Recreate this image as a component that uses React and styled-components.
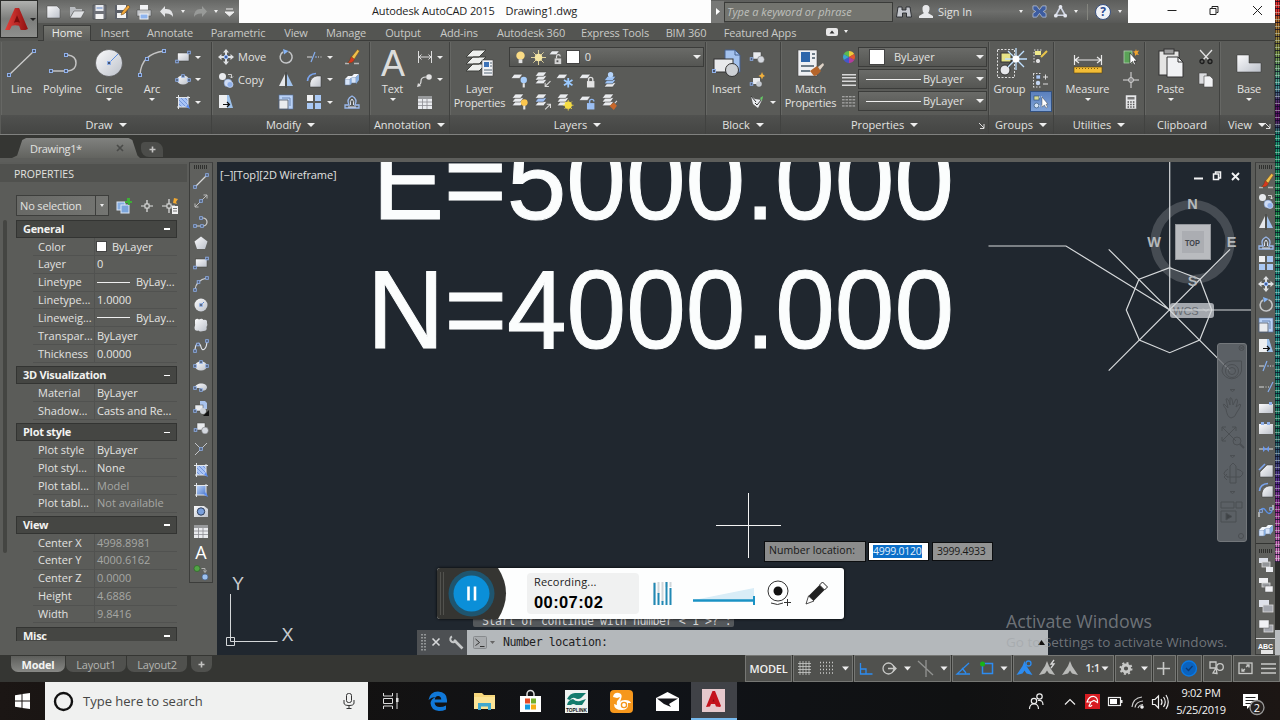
import React from "react";
import styled, { createGlobalStyle, css } from "styled-components";

const GlobalStyle = createGlobalStyle`
  * { box-sizing: border-box; }
  body {
    margin: 0;
    background: #353633;
    overflow: hidden;
    font-family: "Open Sans", "Noto Sans", sans-serif;
    font-size: 11px;
    color: #e2e2e0;
  }
  svg { display: block; flex: none; overflow: visible; }
`;

/* ---------- icons, all on a 16 x 16 grid ---------- */

const W = "#e9ebee";
const B = "#8fb0ea";
const dot = (x, y) => (
  <rect x={x - 1.3} y={y - 1.3} width="2.6" height="2.6" fill="#4a5468" stroke={B} strokeWidth=".9" />
);
const sheet = (x, y, fill = W) => (
  <path d={`M${x + 3} ${y}h8l-3 4h-8z`} fill={fill} stroke="#3c3d3b" strokeWidth=".5" />
);
const layers = (
  <>
    {sheet(1, 8)}
    {sheet(1, 4.5)}
    {sheet(1, 1)}
  </>
);

const glyphs = {
  line: <><path d="M2 14L14 2" stroke="#d8d8d8" strokeWidth="1.2" />{dot(2, 14)}{dot(14, 2)}</>,
  xline: <><path d="M2 14L14 2M2 10.5V14h3.5M10.5 2H14v3.5" stroke="#bcbcbc" fill="none" />{dot(8, 8)}</>,
  pline: <><path d="M2 12h8a4 4 0 0 0 0-8H8" stroke="#d0d0d0" fill="none" strokeWidth="1.2" />{dot(2, 12)}{dot(9, 12)}{dot(8, 4)}</>,
  polygon: <path d="M8 1.5l6.5 5L12 14H4L1.5 6.5z" fill="url(#silver)" />,
  rect: <><rect x="2.5" y="4" width="11.5" height="8" fill="url(#silver)" stroke="#3c3d3b" strokeWidth=".5" />{dot(2, 12.5)}{dot(14, 3.5)}</>,
  arc: <><path d="M2 14Q3 4 14 2" stroke="#d0d0d0" fill="none" strokeWidth="1.2" />{dot(2, 14)}{dot(5.5, 6)}{dot(14, 2)}</>,
  circle: <><circle cx="8" cy="8" r="6.5" fill="url(#silver)" /><path d="M8 8l3-3" stroke="#5b83c6" />{dot(8, 8)}</>,
  cloud: <path d="M2 3q2-2 4-.5Q9 1 10.5 3q4-1 3.5 3 1 2-.5 4 1 4-3 4-4 1-5-.5-4 1-4-3 1-3 .5-4z" fill="url(#silver)" />,
  spline: <><path d="M2 14C2 3 7 4 8 9s6 3 6-7" stroke="#dfe3ea" fill="none" strokeWidth="1.2" />{dot(2, 13)}{dot(5, 6.5)}{dot(14, 3)}</>,
  ellipse: <><ellipse cx="8" cy="8" rx="6" ry="4.5" fill="url(#silver)" />{dot(2, 8)}{dot(14, 8)}{dot(8, 4)}</>,
  ellipsearc: <><path d="M2 9C2 3 14 3 14 8.5q-1 4-6 3V9z" fill="url(#silver)" />{dot(2, 9)}{dot(8, 11)}</>,
  insertflag: <><path d="M7 1h5l2 2v6H7z" fill="#a9c3ec" /><rect x="2" y="5" width="8" height="6" fill={W} stroke="#444" strokeWidth=".5" /><circle cx="10" cy="11" r="3" fill="#cdd1d7" />{dot(2, 11)}<path d="M16 10v6h-6z" fill="#111" /></>,
  block: <><rect x="4" y="3" width="8" height="7" fill={W} stroke="#444" strokeWidth=".5" /><circle cx="12" cy="10.5" r="3.4" fill="#d4d8df" stroke="#666" strokeWidth=".5" />{dot(2.5, 10)}</>,
  blockedit: <><rect x="4" y="6" width="7" height="6" fill={W} /><circle cx="10" cy="12" r="2.8" fill="#c4c9d0" />{dot(2.5, 12)}<path d="M13 0l1 2.5L16 4l-2 1-1 2.5L12 5 9.5 4 12 2.5z" fill="#f2b13c" /></>,
  blockattr: <><path d="M2 2l4 3 7 1-4 8-5-4z" fill={W} /><path d="M2 2l5 6M6 9l2 2 5-6" stroke="#333" fill="none" /><path d="M11 4l3-2-1 5z" fill="#6c6" /></>,
  point: <><path d="M2 2l6 6 6-6M8 8l-6 6" stroke="#c4c6ca" fill="none" />{dot(8, 8)}</>,
  hatch: <><rect x="4" y="4" width="9" height="9" fill="#a9c4f5" /><path d="M4 10l3 3M4 6l7 7M6 4l7 7M10 4l3 3" stroke="#5f83cf" strokeWidth=".7" /><path d="M3.5 1v14M1 3.5h14M13 2v12M2 13h12" stroke="#e3e6ea" fill="none" /><path d="M11 13l4 2-2-5z" fill="#5b8cf0" /></>,
  gradient: <><rect x="4" y="4" width="9" height="9" fill="url(#blueGrad)" /><path d="M3.5 1v14M1 3.5h14M13 2v12M2 13h12" stroke="#e3e6ea" fill="none" /><path d="M11 13l4 2-2-5z" fill="#5b8cf0" /></>,
  region: <><path d="M1 3h10l4 3v8H1z" fill="url(#silver)" /><circle cx="8" cy="8.5" r="3.7" fill="#7aa0dc" stroke="#2c3c58" /></>,
  table: <><rect x="1" y="2" width="14" height="13" fill={W} /><rect x="1" y="2" width="14" height="3" fill="#989a9c" /><path d="M1 8h14M1 11.5h14M5.5 5v10M10 5v10" stroke="#8a8c90" strokeWidth=".8" /></>,
  addsel: <><circle cx="4" cy="3.5" r="3" fill="#52a546" stroke="#2e6727" strokeWidth=".7" /><circle cx="12" cy="12" r="3" fill="#9cc0ef" stroke="#47618c" strokeWidth=".7" /><path d="M8.5 3.5H12v3M10.5 5.5l1.5 2 1.5-2" stroke="#bbb" fill="none" strokeWidth=".9" /></>,
  erase: <><path d="M1 14.5h4M10 14.5h5" stroke="#b7b7b7" strokeWidth="1.4" /><path d="M7.5 8l6-7.500 2 1.500L10 10.500z" fill="#f0c04a" stroke="#774b16" strokeWidth=".5" /><path d="M7 7.500l3.500 3q-2 4.500-7 3 2.500-1 3.500-6z" fill="#d8381f" stroke="#541" strokeWidth=".4" /></>,
  copy: <><circle cx="4.5" cy="4.5" r="3.5" fill={W} /><circle cx="10" cy="11" r="4" fill="#cfdcf3" stroke="#6784ba" strokeWidth=".5" /><circle cx="12" cy="12.5" r="3" fill="#90b0e8" stroke="#dfe8fa" strokeWidth=".6" /><path d="M10 2.5h3.5V6M12 4.5L13.5 6 15 4.5" stroke="#ddd" fill="none" strokeWidth=".9" /></>,
  mirror: <><path d="M7 2v12H1z" fill="#e5e7ea" /><path d="M9 2v12h6z" fill="#a1c3ed" /><path d="M8 0v16" stroke="#333" strokeWidth=".7" /></>,
  offset: <><path d="M1 14v-3h4q-3-6 3-9 6 3 3 9h4v3z" fill="none" stroke="#9ab9ed" strokeWidth="1.3" /><path d="M4 13h8M6.5 11q-1-4 1.5-6 2.5 2 1.5 6" fill="none" stroke="#dfe5f0" /></>,
  array: <><rect x="1" y="1" width="6" height="6" fill="#f0f1f3" /><rect x="9" y="1" width="6" height="6" fill="#a9c8f3" /><rect x="1" y="9" width="6" height="6" fill="#a9c8f3" /><rect x="9" y="9" width="6" height="6" fill="#a9c8f3" /></>,
  move: <><path d="M8 0l3 3.5H9V6H7V3.5H5zM8 16l3-3.5H9V10H7v2.5H5zM0 8l3.5-3v2H6v2H3.5v2zM16 8l-3.5-3v2H10v2h2.5v2z" fill="#dfe1e3" /><rect x="6.5" y="6.5" width="3" height="3" fill="#405f9f" stroke={B} /></>,
  rotate: <><path d="M5 3a6 6 0 1 0 5.5-.4" fill="none" stroke="#c5c7c9" strokeWidth="1.5" /><path d="M5 0l5.5 2L6 5.5z" fill="#86b4f5" /></>,
  scale: <><rect x="1" y="1" width="14" height="14" fill="#b9d2f6" stroke="#54719e" strokeWidth=".6" /><path d="M1 6h9v9H1z" fill={W} stroke="#4c5766" strokeWidth=".8" /><path d="M4 4h8v8" fill="none" stroke="#6c87b5" /></>,
  stretch: <><path d="M8 1h3l4 13H8z" fill="#9dc1ea" /><path d="M1 1h8v13H1z" fill="#eceef0" /><path d="M5 10.5h6M9 8l2.5 2.5L9 13" stroke="#111" strokeWidth="1.2" fill="none" /></>,
  trim: <><path d="M1 8h5M12 8h1M14.5 8h1" stroke="#d8d8d8" strokeWidth="1.2" /><path d="M5 13L9 3M9 8h2" stroke="#85aeee" strokeWidth="1.2" /></>,
  extend: <><path d="M1 8h5M7.5 8h1M10 8h1" stroke="#d8d8d8" strokeWidth="1.2" /><path d="M10 13l5-10" stroke="#85aeee" strokeWidth="1.2" /></>,
  fillet: <><path d="M1.5 9Q2 2 10 1.5" stroke="#7ba4ec" strokeWidth="1.6" fill="none" /><path d="M4 15V11q1-6 7-7h4v11z" fill="url(#silver)" stroke="#333" strokeWidth=".5" /></>,
  chamfer: <><path d="M1 8L7 2" stroke="#7ba4ec" strokeWidth="1.6" /><path d="M2 15v-5l7-7h6v12z" fill="url(#silver)" stroke="#333" strokeWidth=".5" /></>,
  explode: <><path d="M1 7h5v6H1zM7 5h5v6H7z" fill="#d6e4f8" stroke="#5a7398" strokeWidth=".5" /><path d="M1 7l3-3h5L6 7zM7 5l3-3h5l-3 3z" fill="#f2f6fc" /><path d="M12 5l3-3v6l-3 4zM6 7l1.5-1v6L6 13z" fill="#86aee2" /></>,
  breakpt: <><rect x="1" y="4" width="14" height="9" fill="url(#silver)" /><rect x="11" y="2" width="3" height="3" fill={B} /></>,
  brk: <><path d="M1 4h3v1h2V4h3v1h2V4h4v10H1z" fill="url(#silver)" /><rect x="3" y="2" width="3" height="3" fill={B} /><rect x="9" y="2" width="3" height="3" fill={B} /></>,
  join: <><path d="M1 8h14" stroke="#dedede" /><path d="M5 5l3 3-3 3zM11 5L8 8l3 3z" fill="#6c9af0" /></>,
  blend: <><path d="M1 14V9M15 2v5" stroke="#c8c8c8" strokeWidth="1.5" /><path d="M2 8q3-5 6 0t6 0" stroke="#5b92ea" strokeWidth="1.4" fill="none" />{dot(3, 8)}{dot(13, 6)}</>,
  order1: <><rect x="1" y="1" width="9" height="5" fill="#dde1ea" /><rect x="4" y="5" width="8" height="5" fill="#939699" stroke="#ddd" strokeWidth=".8" /><rect x="8" y="10" width="7" height="5" fill="#eceef2" /></>,
  order2: <><rect x="1" y="1" width="9" height="5" fill="#f0f1f4" /><rect x="4" y="6" width="8" height="4" fill="#989b9f" stroke="#ddd" strokeWidth=".8" /><rect x="7" y="9" width="8" height="6" fill="#f0f1f4" stroke="#555" strokeWidth=".5" /></>,
  order3: <><rect x="1" y="2" width="10" height="7" fill="#dfe2ea" /><rect x="5" y="7" width="10" height="7" fill="#a3a6ad" stroke="#ddd" strokeWidth=".8" /></>,
  order4: <><rect x="6" y="7" width="9" height="7" fill="#a3a6ad" stroke="#ddd" strokeWidth=".8" /><rect x="1" y="2" width="10" height="8" fill="#f1f2f5" stroke="#555" strokeWidth=".5" /></>,
  dim: <path d="M1.5 2v12M14.5 2v12M2 8h12M4.5 5.5L2 8l2.5 2.5M11.5 5.5L14 8l-2.5 2.5" stroke="#dcdcdc" fill="none" />,
  leader: <><path d="M1 13q3 0 3-4t5-4" stroke="#dcdcdc" fill="none" strokeWidth="1.2" /><circle cx="12" cy="5" r="2.8" fill="#e4e4e4" /><path d="M0 15l1-4 3 3z" fill="#ddd" /></>,
  layoff: <>{sheet(0, 3)}<circle cx="12" cy="8.5" r="3" fill="#a7cdfa" /><path d="M11 11.5h2v4h-2z" fill="#e4e4e4" /></>,
  layiso: <>{layers}<path d="M15.5 9.5l-5 5M10.5 11v3.5H14" stroke="#dadada" fill="none" /></>,
  layuniso: <>{sheet(1, 8)}{sheet(1, 4.5, "#9dbef2")}{sheet(1, 1)}<path d="M10.5 15.5l5-5M12 10.5h3.5V14" stroke="#dadada" fill="none" /></>,
  layfrz: <>{sheet(0, 3)}<path d="M11.5 6.5v9M7.5 8.5l8 5M15.5 8.5l-8 5" stroke="#9bcaff" strokeWidth="1.7" /></>,
  laylock: <>{sheet(0, 3)}<path d="M9 10V8a2 2 0 0 1 4 0v2" stroke="#ddd" fill="none" strokeWidth="1.3" /><rect x="7.5" y="9.5" width="7" height="6" fill="#e3e3e3" /></>,
  laycur: <>{sheet(3, 11)}{sheet(3, 8, "#9dc3f5")}{sheet(3, 5, "#9dc3f5")}<circle cx="9" cy="3.5" r="2.5" fill="#b6d5fb" /></>,
  layon: <>{layers}<circle cx="12.5" cy="9" r="3.2" fill="#fbc64e" /><path d="M11.5 12h2v3.5h-2z" fill="#e4e4e4" /></>,
  laythw: <>{layers}<circle cx="11.5" cy="11.5" r="3.4" fill="#f6dd44" /><path d="M11.5 6.5v10M6.5 11.5h10M8 8l7 7M15 8l-7 7" stroke="#f6dd44" strokeWidth=".8" /></>,
  layunl: <>{sheet(0, 3)}<path d="M10 10V8a2 2 0 0 1 4 0" stroke="#8fb6ee" fill="none" strokeWidth="1.3" /><rect x="7.5" y="9.5" width="7" height="6" fill="#9cc0f4" /></>,
  laymat: <>{layers}<path d="M8 12l4-3 3 3-3 4z" fill="#c8672a" /><path d="M13 9.5l2-2" stroke="#ddd" /></>,
  ungroup: <><path d="M2 1h8M2 3v12" stroke="#ddd" strokeDasharray="1.5 1.5" /><rect x="3" y="2" width="6" height="4" fill="#eee98a" /><circle cx="6" cy="12" r="2.6" fill="#e4e4e4" stroke="#222" strokeWidth=".6" /><path d="M9 8l6-6" stroke="#e9c54a" strokeWidth="2" /></>,
  groupedit: <><path d="M1 1.5h8M1.5 2v13M1 15h8" stroke="#ddd" strokeDasharray="1.5 1.5" /><rect x="4" y="3" width="4.5" height="4" fill="#aac6f2" stroke="#333" strokeWidth=".5" /><circle cx="6" cy="11" r="2.2" fill="#c4d6f2" /><path d="M11 5h5M13.5 2.5v5M11 12h5" stroke="#ddd" /></>,
  groupsel: <><rect x="1" y="2" width="5" height="4" fill="#d5d895" stroke="#246" strokeWidth=".6" /><circle cx="3.5" cy="11.5" r="2.4" fill="#d4e3f6" stroke="#246" strokeWidth=".6" /><path d="M6 3h3M6 12h3" stroke="#e5edf8" strokeDasharray="1 1" /><path d="M9 3v10l2.5-2 1.5 3 1.5-.8-1.5-3H15z" fill="#fff" stroke="#333" strokeWidth=".4" /></>,
  quick: <><rect x="1" y="2" width="8" height="12" fill="#5aa257" stroke="#b9d7b7" strokeWidth=".7" /><path d="M7 4v11l2.5-2.5L11 16l1.5-.8L11 12h3z" fill="#fff" stroke="#222" strokeWidth=".6" /><path d="M13 0l.6 2 2.4-.5L14.5 4l1.5 2-2.5-.6L12 7l-.2-3L10 2.5l2.2-.3z" fill="#f5a52c" /></>,
  idpoint: <><path d="M8 0v16M0 8h16" stroke="#ddd" /><circle cx="8" cy="8" r="2.5" fill="#888" stroke="#ddd" strokeWidth=".8" /></>,
  calc: <><rect x="2.5" y="1" width="11" height="14" fill="#e6e7e8" stroke="#555" strokeWidth=".5" /><rect x="4.5" y="3" width="7" height="2.5" fill="#777" /><path d="M4.5 8H12M4.5 10.5H12M4.5 13H12" stroke="#555" strokeWidth="1.3" strokeDasharray="1.5 1.2" /></>,
  cut: <><path d="M2 1l9 10M14 1L5 11" stroke="#e2e2e2" strokeWidth="1.3" /><circle cx="4" cy="12.5" r="2" fill="none" stroke="#1c1c1c" strokeWidth="1.3" /><circle cx="12" cy="12.5" r="2" fill="none" stroke="#1c1c1c" strokeWidth="1.3" /></>,
  copyclip: <><path d="M1 1h8v11H1z" fill="#dcdde0" stroke="#444" strokeWidth=".6" /><path d="M6 4h6l3 3v8H6z" fill="#f1f2f4" stroke="#444" strokeWidth=".6" /></>,
  wheel: <><path d="M8 8V1a7 7 0 0 1 6 3.5z" fill="#f0c93b" /><path d="M8 8l6-3.5a7 7 0 0 1 0 7z" fill="#e4572e" /><path d="M8 8l6 3.5A7 7 0 0 1 8 15z" fill="#b13d9e" /><path d="M8 8v7a7 7 0 0 1-6-3.5z" fill="#4556c9" /><path d="M8 8l-6 3.5a7 7 0 0 1 0-7z" fill="#3ba3cf" /><path d="M8 8L2 4.5A7 7 0 0 1 8 1z" fill="#5bbb4c" /></>,
  weights: <path d="M0 2h16M0 5.5h16M0 9.5h16M0 14h16" stroke="#d8d8d8" strokeWidth="1.8" />,
  types: <path d="M0 2h16M0 5.5h16M0 9h16M0 12.5h16" stroke="#c8c8c8" strokeWidth="1" strokeDasharray="3 1" />,
  bulb: <><circle cx="8" cy="6" r="4.5" fill="#fbdc85" /><path d="M6 10h4v4H6z" fill="#e4e4e4" /></>,
  sun: <><path d="M8 0v16M0 8h16M2.5 2.5l11 11M13.5 2.5l-11 11" stroke="#e7d9a0" /><circle cx="8" cy="8" r="4" fill="#f6e7a4" /></>,
  unlock: <>{sheet(0, 1)}<path d="M8 9V7a2 2 0 0 1 4 0" stroke="#ddd" fill="none" strokeWidth="1.3" /><rect x="6" y="9" width="7" height="6" fill="#d4d4d4" /><rect x="8" y="11" width="2" height="2" fill="#555" /></>,
  newfile: <path d="M1 2h10l3 3v9H1z" fill="url(#silver)" stroke="#444" strokeWidth=".5" />,
  open: <><path d="M1 3h5l1 2h6v2H5l-4 6z" fill="#b9bcc0" /><path d="M1 14l4-7h11l-4 7z" fill="#dfe1e4" stroke="#444" strokeWidth=".5" /></>,
  save: <><path d="M2 1h13v14H2z" fill="#6e7178" stroke="#44464a" strokeWidth=".6" /><rect x="4.5" y="1" width="8" height="6" fill="#e7e9ee" /><rect x="4.5" y="10" width="8" height="5" fill="#f4f4f4" /><path d="M5.5 4h6" stroke="#5d83c4" /></>,
  saveas: <><path d="M1 1h13v14H1z" fill="#5c6068" /><rect x="3" y="1" width="9" height="5" fill="#f3f4f6" /><rect x="3" y="9" width="9" height="5" fill="#f4f4f4" /><path d="M7 11l1-3 6-7 2 2-6 7z" fill="#f0a63a" stroke="#63400f" strokeWidth=".5" /></>,
  print: <><rect x="4" y="1" width="8" height="6" fill="#f2f3f5" /><path d="M1 6h14v6H1z" fill="#c4c7cb" stroke="#444" strokeWidth=".5" /><rect x="4" y="10" width="8" height="5" fill="#8eb4ee" stroke="#f3f3f3" /></>,
  undo: <path d="M6 2v3q8-1 8 8-2-4-8-3.5V13L1 7.5z" fill="#e2e3e5" />,
  redo: <path d="M10 2v3Q2 4 2 13q2-4 8-3.5V13l5-5.5z" fill="#989a98" />,
  binoc: <path d="M2 3h4v3h4V3h4l1.5 10h-5V9h-4v4h-6z" fill="#c6c9cf" stroke="#26282c" strokeWidth=".9" />,
  person: <path d="M8 1q4 0 3.5 4.5Q11 8 10 9l5 3v2H1v-2l5-3Q4.5 8 4.5 5.5 4 1 8 1z" fill="#e7e8ea" />,
  exch: <path d="M1 2h4l3 4 3-4h4v4l-3 2 3 2v4h-4l-3-4-3 4H1v-4l3-2-3-2z" fill="#3d5c9f" stroke="#b9c4d9" strokeWidth=".8" />,
  a360: <><path d="M8 3l5 9H3z" fill="none" stroke="#cfd4e2" strokeWidth="1.8" /><circle cx="8" cy="3" r="2" fill="#e4e7ef" /><circle cx="3" cy="12.5" r="2" fill="#e4e7ef" /><circle cx="13" cy="12.5" r="2" fill="#e4e7ef" /></>,
  help: <circle cx="8" cy="8" r="7.5" fill="#f0f2f6" stroke="#38507f" />,
  pickadd: <><rect x="1" y="4" width="8" height="8" fill="#86aee2" stroke="#dce6f5" /><rect x="5" y="7" width="8" height="8" fill="#7ba5dc" stroke="#dce6f5" /><path d="M11 0h3v3h2v2h-2v2h-2V5H9V3h2z" fill="#3fae37" /></>,
  pick: <><path d="M8 2v12M2 8h12" stroke="#e4e4e4" strokeWidth="1.2" /><rect x="6" y="6" width="4" height="4" fill="#5b5c59" stroke="#e4e4e4" /></>,
  quicksel: <><path d="M7 1v14M0 8h13" stroke="#e4e4e4" strokeWidth="1.2" /><rect x="5" y="6" width="4" height="4" fill="#5b5c59" stroke="#e4e4e4" /><path d="M12 0l4 1-2 3 1 2-4-1z" fill="#f2a830" /><rect x="10" y="8" width="6" height="8" fill="#f1f1f1" /><path d="M11 10.5h4M11 13h4" stroke="#777" /></>,
};

const Icon = ({ name, size = 16 }) => (
  <svg width={size} height={size} viewBox="0 0 16 16" fill="none">
    {glyphs[name]}
  </svg>
);

const Defs = () => (
  <HiddenSvg width="0" height="0">
    <defs>
      <linearGradient id="silver" x1="0" y1="0" x2="1" y2="1">
        <stop offset="0" stopColor="#fbfbfc" />
        <stop offset="1" stopColor="#bcc1ca" />
      </linearGradient>
      <linearGradient id="blueGrad" x1="0" y1="0" x2="1" y2="1">
        <stop offset="0" stopColor="#b9d2f8" />
        <stop offset="1" stopColor="#4d78c9" />
      </linearGradient>
      <linearGradient id="redGrad" x1="0" y1="0" x2="1" y2="0">
        <stop offset="0" stopColor="#e4413b" />
        <stop offset="1" stopColor="#8f1010" />
      </linearGradient>
    </defs>
  </HiddenSvg>
);

const ALogo = ({ size }) => (
  <svg width={size} height={size} viewBox="0 0 24 24">
    <path d="M10.500 1h4L23 21q-3 1.500-7 1l-1.500-4q-4-1-7 0l-2 4H1z" fill="url(#redGrad)" />
    <path d="M12.500 8l3 7q-3-1-6 0z" fill="#7a0e0e" />
  </svg>
);

/* ---------- page frame ---------- */

const HiddenSvg = styled.svg`
  position: absolute;
`;

const Page = styled.div`
  position: relative;
  width: 1280px;
  height: 720px;
  display: flex;
  flex-direction: column;
  overflow: hidden;
  background: #353633;
  white-space: nowrap;
  line-height: 14px;
`;

const Caret = styled.span`
  width: 0;
  height: 0;
  flex: none;
  border: ${(p) => p.$s || 3}px solid transparent;
  border-top: ${(p) => (p.$s || 3) + 0.5}px solid ${(p) => p.$color || "#eeeeee"};
  border-bottom: 0;
`;

/* ---------- title bar and ribbon tabs ---------- */

const Header = styled.header`
  display: flex;
  height: 41px;
  background: #545552;
`;

const AppButton = styled.div`
  width: 38px;
  height: 38px;
  display: flex;
  align-items: center;
  gap: 1px;
  padding-left: 3px;
  border: 1px solid #2c2d2b;
  background: linear-gradient(#b0b1af, #7c7d7b 50%, #8e8f8d);
`;

const HeaderRows = styled.div`
  flex: 1;
  display: flex;
  flex-direction: column;
`;

const TitleBar = styled.div`
  height: 23px;
  padding-right: 5px;
  display: flex;
`;

const QuickAccess = styled.div`
  width: 201px;
  flex: none;
  display: flex;
  align-items: center;
  padding-left: 8px;
  gap: 6.5px;
  background: linear-gradient(#666765, #7c7d7b 50%, #656664);
`;

const Title = styled.div`
  width: 472px;
  flex: none;
  padding: 4px 0 0 133px;
  background: #fdfdfd;
  color: #1c1c1c;
  letter-spacing: -0.12px;
  white-space: pre;
`;

const InfoCenter = styled.div`
  width: 417px;
  flex: none;
  display: flex;
  align-items: center;
  background: linear-gradient(#5d5e5c, #6d6e6c 50%, #575856);
`;

const InfoArrow = styled.div`
  width: 13px;
  height: 22px;
  flex: none;
  display: grid;
  place-items: center;
  background: #777876;
`;

const SearchField = styled.div`
  width: 169px;
  height: 20px;
  flex: none;
  padding: 2px 2px;
  border: 1px solid #3a3b39;
  background: #73746f;
  color: #bfc0bd;
  font-style: italic;
`;

const InfoItem = styled.div`
  width: ${(p) => p.$w}px;
  flex: none;
  display: flex;
  align-items: center;
  justify-content: ${(p) => (p.$end ? "flex-end" : "center")};
  padding-right: ${(p) => p.$end || 0}px;
  position: relative;
`;

const InfoSeparator = styled.div`
  width: 1px;
  height: 16px;
  flex: none;
  margin: 0 5px 0 9px;
  background: #84857f;
`;

const HelpMark = styled.b`
  position: absolute;
  color: #2d4c94;
  font-size: 12px;
`;

const WindowButtons = styled.div`
  flex: 1;
  background: #fdfdfd;
`;

const TabStrip = styled.nav`
  height: 18px;
  padding-left: 5px;
  display: flex;
  align-items: stretch;
  border-bottom: 1px solid #3b3c3a;
`;

const RibbonTab = styled.div`
  width: ${(p) => p.$w}px;
  padding-top: 3px;
  text-align: center;
  color: #c9cac7;
  letter-spacing: -0.15px;
  ${(p) =>
    p.$active &&
    css`
      margin: 2px 0 -1px;
      padding-top: 0;
      border: 1px solid #3b3c3a;
      border-bottom: 0;
      background: linear-gradient(#73746f, #5d5e5b);
      color: #ececea;
    `}
`;

const TabToggle = styled.div`
  display: flex;
  align-items: center;
  gap: 6px;
  padding-left: 23px;
`;

const tabs = [
  ["Home", 48], ["Insert", 48], ["Annotate", 62], ["Parametric", 74], ["View", 42], ["Manage", 58],
  ["Output", 56], ["Add-ins", 56], ["Autodesk 360", 88], ["Express Tools", 80], ["BIM 360", 62], ["Featured Apps", 86],
];

const TopBar = () => (
  <Header>
    <AppButton>
      <ALogo size={25} />
      <Caret $color="#222" />
    </AppButton>
    <HeaderRows>
      <TitleBar>
        <QuickAccess>
          {["newfile", "open", "save", "saveas", "print", "undo"].map((n) => <Icon key={n} name={n} />)}
          <Caret $s={2.5} />
          <Icon name="redo" />
          <Caret $s={2.5} />
          <svg width="9" height="10" viewBox="0 0 9 10"><path d="M1 2h7M0 5h9L4.5 9z" fill="#eee" stroke="#eee" /></svg>
        </QuickAccess>
        <Title>{"Autodesk AutoCAD 2015    Drawing1.dwg"}</Title>
        <InfoCenter>
          <InfoArrow><svg width="4" height="7"><path d="M0 0l4 3.5L0 7z" fill="#fff" /></svg></InfoArrow>
          <SearchField>Type a keyword or phrase</SearchField>
          <InfoItem $w={22}><Icon name="binoc" /></InfoItem>
          <InfoItem $w={22}><Icon name="person" /></InfoItem>
          <InfoItem $w={36}>Sign In</InfoItem>
          <InfoItem $w={58} $end={8.5}><Caret $s={2.5} /></InfoItem>
          <InfoItem $w={16}><Icon name="exch" size={15} /></InfoItem>
          <InfoItem $w={27}><Icon name="a360" size={15} /></InfoItem>
          <Caret $s={2.5} />
          <InfoSeparator />
          <InfoItem $w={20}><Icon name="help" /><HelpMark>?</HelpMark></InfoItem>
          <InfoItem $w={14}><Caret $s={2.5} /></InfoItem>
        </InfoCenter>
        <WindowButtons>
          <svg width="147" height="22" viewBox="1128 0 147 22" fill="none" stroke="#222">
            <path d="M1167.5 10.5h9M1210 8.5h6v6h-6zM1212 8V6.500h6v6h-1.500M1253 6l9 9M1262 6l-9 9" />
          </svg>
        </WindowButtons>
      </TitleBar>
      <TabStrip>
        {tabs.map(([t, w], i) => <RibbonTab key={t} $w={w} $active={i === 0}>{t}</RibbonTab>)}
        <TabToggle>
          <svg width="12" height="8"><rect width="12" height="8" rx="2" fill="#e8e8e8" /><path d="M3.5 5.5h5L6 2.5z" fill="#333" /></svg>
          <Caret $s={2.5} />
        </TabToggle>
      </TabStrip>
    </HeaderRows>
  </Header>
);

/* ---------- ribbon ---------- */

const Ribbon = styled.section`
  display: flex;
  height: 94px;
  padding: 1px 5px 0 1px;
  background: #5a5b58;
  border-bottom: 1px solid #80817f;
`;

const PanelBox = styled.div`
  width: ${(p) => p.$w}px;
  flex: none;
  display: flex;
  flex-direction: column;
  border-right: 1px solid #414240;
  box-shadow: inset 1px 0 0 #666764;
`;

const PanelBody = styled.div`
  height: 73px;
  padding: 4px 0 0 ${(p) => p.$pl || 0}px;
  display: flex;
`;

const PanelTitle = styled.div`
  flex: 1;
  display: flex;
  align-items: center;
  justify-content: center;
  gap: 6px;
  position: relative;
  background: linear-gradient(#50514f, #444543);
`;

const Launcher = styled.svg`
  position: absolute;
  right: 3px;
  bottom: 5px;
`;

const BigButton = styled.div`
  width: ${(p) => p.$w}px;
  flex: none;
  display: flex;
  flex-direction: column;
  align-items: center;
  line-height: 14px;
  letter-spacing: -0.15px;
  text-align: center;
  white-space: pre;
  > svg { margin-bottom: 2px; height: 34px; }
  > span:last-child { margin-top: 2px; }
`;

const Column = styled.div`
  width: ${(p) => p.$w}px;
  flex: none;
  display: flex;
  flex-direction: column;
`;

const SmallItem = styled.div`
  width: ${(p) => (p.$w ? `${p.$w}px` : "auto")};
  height: 22.5px;
  display: flex;
  align-items: center;
  gap: ${(p) => p.$gap || 4}px;
  padding-left: 2px;
`;

const ActiveItem = styled.div`
  width: 22px;
  height: 21px;
  display: grid;
  place-items: center;
  border: 1px solid #33517f;
  background: linear-gradient(#5b80bd, #7fa3d8);
`;

const Combo = styled.div`
  width: ${(p) => p.$w}px;
  height: 20.5px;
  margin: 0.8px 0 0.7px;
  padding: 0 2px 0 ${(p) => p.$pl}px;
  display: flex;
  align-items: center;
  gap: ${(p) => p.$gap || 2}px;
  border: 1px solid #3b3c3a;
  background: linear-gradient(#6a6b68, #555653);
  > span:last-child { margin-left: auto; }
`;

const Swatch = styled.i`
  width: ${(p) => p.$s}px;
  height: ${(p) => p.$s}px;
  flex: none;
  background: #fff;
  outline: 1px solid #444;
`;

const Rule = styled.i`
  width: ${(p) => p.$w}px;
  height: 1px;
  flex: none;
  background: #efefef;
`;

const Row = styled.div`
  display: flex;
`;

const Panel = ({ w, title, pl, arrow = true, launch, children }) => (
  <PanelBox $w={w}>
    <PanelBody $pl={pl}>{children}</PanelBody>
    <PanelTitle>
      {title}
      {arrow && <Caret $s={4} />}
      {launch && <Launcher width="6" height="6"><path d="M0 0l5 5M5 1v4.5H1" stroke="#ddd" fill="none" /></Launcher>}
    </PanelTitle>
  </PanelBox>
);

const Big = ({ w, label, caret, children }) => (
  <BigButton $w={w}>
    <svg width="34" height="34" viewBox="0 0 34 34" fill="none">{children}</svg>
    {label}
    {caret && <Caret />}
  </BigButton>
);

const SmallStack = ({ w, items, carets, gap }) => (
  <Column $w={w}>
    {items.map((n) => (
      <SmallItem key={n} $gap={gap}>
        <Icon name={n} />
        {carets && carets.includes(n) && <Caret />}
      </SmallItem>
    ))}
  </Column>
);

const bigDot = (x, y) => <rect x={x - 1.5} y={y - 1.5} width="3" height="3" fill="#46536d" stroke={B} />;

const RibbonPanels = () => (
  <Ribbon>
    <Panel w={211} title="Draw" pl={1}>
      <Big w={39} label="Line"><path d="M4 29L29 5" stroke="#ccc" strokeWidth="1.3" />{bigDot(4, 29)}{bigDot(29, 5)}</Big>
      <Big w={43} label="Polyline"><path d="M5 25h17q8-1 8-8t-8-8h-2" stroke="#c4c4c4" strokeWidth="1.5" />{bigDot(5, 25)}{bigDot(20, 25)}{bigDot(20, 9)}</Big>
      <Big w={50} label="Circle" caret><circle cx="17" cy="17" r="13.5" fill="url(#silver)" stroke="#333" strokeWidth=".5" /><path d="M17 17l9-9" stroke="#5d8fe0" />{bigDot(17, 17)}</Big>
      <Big w={36} label="Arc" caret><path d="M5 29Q6 8 29 5" stroke="#c4c4c4" strokeWidth="1.4" />{bigDot(5, 29)}{bigDot(12, 13)}{bigDot(29, 5)}</Big>
      <Column $w={3} />
      <SmallStack w={32} items={["rect", "ellipse", "hatch"]} carets={["rect", "ellipse", "hatch"]} />
    </Panel>
    <Panel w={158} title="Modify" pl={4}>
      <Column $w={60}>
        <SmallItem><Icon name="move" />Move</SmallItem>
        <SmallItem><Icon name="copy" />Copy</SmallItem>
        <SmallItem><Icon name="stretch" /></SmallItem>
      </Column>
      <SmallStack w={28} items={["rotate", "mirror", "scale"]} />
      <SmallStack w={38} items={["trim", "fillet", "array"]} carets={["trim", "fillet", "array"]} gap={5} />
      <SmallStack w={20} items={["erase", "explode", "offset"]} />
    </Panel>
    <Panel w={80} title="Annotation">
      <Big w={45} label="Text" caret>
        <text x="17" y="30" textAnchor="middle" fontFamily="Liberation Sans" fontSize="36" fill="#dcdddc">A</text>
      </Big>
      <SmallStack w={32} items={["dim", "leader", "table"]} carets={["dim", "leader"]} />
    </Panel>
    <Panel w={256} title="Layers">
      <Big w={59} label={"Layer\nProperties"}>
        <path d="M10 18h13l-7 7H3zM10 11h13l-7 7H3zM10 4h13l-7 7H3z" fill="#eef0ee" stroke="#3e403c" />
        <rect x="19" y="14" width="11" height="16" fill="#f2f3f5" stroke="#444" strokeWidth=".6" />
        <rect x="21" y="16" width="5" height="5" fill="#3c72b8" /><path d="M27 17h2M27 20h2M21 24h8M21 27h8" stroke="#567" />
      </Big>
      <Column $w={196}>
        <Combo $w={195} $pl={3} $gap={3}>
          <Icon name="bulb" size={15} /><Icon name="sun" size={15} /><Icon name="unlock" size={15} /><Swatch $s={12} />&nbsp;0
          <Caret $s={4} />
        </Combo>
        <Row>{["layoff", "layiso", "layfrz", "laylock", "laycur"].map((n) => <SmallItem key={n} $w={22.5}><Icon name={n} size={17} /></SmallItem>)}</Row>
        <Row>{["layon", "layuniso", "laythw", "layunl", "laymat"].map((n) => <SmallItem key={n} $w={22.5}><Icon name={n} size={17} /></SmallItem>)}</Row>
      </Column>
    </Panel>
    <Panel w={75} title="Block">
      <Big w={41} label="Insert">
        <path d="M15 4h10l5 5v17H15z" fill="#a4c2ee" stroke="#46608d" /><path d="M25 4v5h5" stroke="#46608d" />
        <rect x="4" y="13" width="19" height="13" fill="#e8e9ec" stroke="#333" /><circle cx="22" cy="24" r="6.5" fill="#cdd0d5" stroke="#333" />{bigDot(4, 25)}
      </Big>
      <SmallStack w={34} items={["block", "blockedit", "blockattr"]} carets={["blockattr"]} gap={5} />
    </Panel>
    <Panel w={208} title="Properties" launch>
      <Big w={59} label={"Match\nProperties"}>
        <rect x="4" y="4" width="19" height="26" fill="#eff0f3" stroke="#444" strokeWidth=".6" />
        <rect x="7" y="6" width="9" height="10" fill="#2e66ab" /><path d="M18 8h3M18 12h3M7 20h13M7 25h9" stroke="#456" strokeWidth="1.3" />
        <path d="M16 25q4-3 7-5l4 5q-4 5-7 5z" fill="#b5652b" /><path d="M24 21l5-4 1 2-4 5z" fill="#ded3c7" />
      </Big>
      <Column $w={18}>
        {["wheel", "weights", "types"].map((n) => <SmallItem key={n}><Icon name={n} size={14} /></SmallItem>)}
      </Column>
      <Column $w={130}>
        <Combo $w={129} $pl={11} $gap={10}><Swatch $s={14} />ByLayer<Caret $s={4} /></Combo>
        <Combo $w={129} $pl={7}><Rule $w={55} />ByLayer<Caret $s={4} /></Combo>
        <Combo $w={129} $pl={7}><Rule $w={55} />ByLayer<Caret $s={4} /></Combo>
      </Column>
    </Panel>
    <Panel w={65} title="Groups">
      <Big w={41} label="Group">
        <path d="M4.5 3.5h17v28h-17z" stroke="#ddd" strokeDasharray="2 1.5" />
        <rect x="8" y="7" width="10" height="9" fill="#e5e387" stroke="#333" /><circle cx="12" cy="24" r="5" fill="#e6e7ea" stroke="#333" /><path d="M14 21l6-8" stroke="#333" />
        <path d="M23 2v22M12 13h22M15 5l16 16M31 5L15 21" stroke="#bfe0ff" strokeWidth="1.3" /><circle cx="23" cy="13" r="3.5" fill="#fff" />
      </Big>
      <Column $w={23}>
        <SmallItem><Icon name="ungroup" /></SmallItem>
        <SmallItem><Icon name="groupedit" /></SmallItem>
        <ActiveItem><Icon name="groupsel" /></ActiveItem>
      </Column>
    </Panel>
    <Panel w={91} title="Utilities">
      <Big w={67} label="Measure" caret>
        <path d="M3.5 9v10M30.5 9v10M4 14h26M8 11l-4 3 4 3M26 11l4 3-4 3" stroke="#e9e9e9" strokeWidth="1.2" />
        <rect x="3" y="21" width="28" height="6" fill="#f3bd36" stroke="#5d430c" strokeWidth=".6" /><path d="M5 22.5h24" stroke="#7e5c14" strokeDasharray="1 2" />
      </Big>
      <SmallStack w={22} items={["quick", "idpoint", "calc"]} />
    </Panel>
    <Panel w={75} title="Clipboard" arrow={false}>
      <Big w={51} label="Paste" caret>
        <rect x="5" y="5" width="20" height="24" fill="#e4e4e3" stroke="#333" /><rect x="10" y="3" width="10" height="5" fill="#999" stroke="#333" />
        <path d="M13 11h11l5 5v15H13z" fill="#f1f2f4" stroke="#333" /><path d="M24 11v5h5" stroke="#333" />
      </Big>
      <SmallStack w={22} items={["cut", "copyclip"]} />
    </Panel>
    <Panel w={55} title="View" launch>
      <Big w={58} label="Base" caret><path d="M5 9h12v8h12v9H5z" fill="url(#silver)" stroke="#333" strokeWidth=".5" /></Big>
    </Panel>
  </Ribbon>
);

/* ---------- drawing tabs ---------- */

const FileTabs = styled.div`
  height: 27px;
  display: flex;
  align-items: flex-end;
  padding-left: 12px;
  background: #353633;
  border-bottom: 4px solid #5d5e5b;
`;

const FileTab = styled.div`
  width: 128px;
  height: 20px;
  padding: 4px 16px 0 18px;
  display: flex;
  justify-content: space-between;
  letter-spacing: -0.35px;
  background: linear-gradient(#80817f, #62635f);
  clip-path: polygon(0 100%, 4% 88%, 8% 10%, 11% 0, 91% 0, 94% 10%, 98% 88%, 100% 100%);
`;

const NewTab = styled.div`
  width: 22px;
  height: 15px;
  margin: 0 0 1px 1px;
  display: grid;
  place-items: center;
  border-radius: 4px 8px 0 8px;
  background: #4c4d4a;
`;

/* ---------- properties palette ---------- */

const Workspace = styled.main`
  height: 493px;
  display: flex;
  background: #5b5c59;
`;

const Palette = styled.aside`
  width: 189px;
  flex: none;
  overflow: hidden;
`;

const PaletteTitle = styled.div`
  height: 18px;
  margin: 2px 2px 0 0;
  padding: 4px 0 0 14px;
  background: #50514e;
  font-size: 10.5px;
  line-height: 13px;
`;

const SelectRow = styled.div`
  display: flex;
  align-items: center;
  gap: 7px;
  padding: 13px 0 4px 16px;
`;

const Selection = styled.div`
  width: 93px;
  height: 21px;
  padding-left: 3px;
  display: flex;
  align-items: center;
  justify-content: space-between;
  letter-spacing: -0.15px;
  border: 1px solid #3d3e3c;
  background: linear-gradient(90deg, #686966, #747572);
`;

const SelectArrow = styled.div`
  width: 13px;
  height: 19px;
  display: grid;
  place-items: center;
  border-left: 1px solid #3d3e3c;
`;

const PaletteBody = styled.div`
  display: flex;
  height: 421px;
  overflow: hidden;
`;

const ScrollThumb = styled.div`
  width: 4px;
  height: 333px;
  margin: 0 9px 0 3px;
  border-radius: 2px;
  background: #444542;
`;

const Groups = styled.div`
  width: 161px;
`;

const GroupHead = styled.div`
  height: 18px;
  padding: 0 6px 0 6px;
  display: flex;
  align-items: center;
  justify-content: space-between;
  border: 1px solid #333432;
  background: #454643;
  font-weight: 700;
  letter-spacing: -0.3px;
  color: #f2f2f0;
  > i { width: 6px; height: 1.5px; background: #fff; }
`;

const PropRows = styled.div`
  margin: 0 0 3.4px 17px;
`;

const PropRow = styled.div`
  height: 17.85px;
  display: grid;
  grid-template-columns: 61px 1fr;
  align-items: center;
  border-bottom: 1px solid #515250;
  > span { padding-left: 5px; }
`;

const PropValue = styled.div`
  height: 17px;
  padding-left: 2px;
  display: flex;
  align-items: center;
  gap: 6px;
  border-left: 1px solid #515250;
  color: ${(p) => (p.$dim ? "#a6a7a4" : "#e6e6e4")};
`;

const groups = [
  ["General", [
    ["Color", <><Swatch $s={9} />ByLayer</>], ["Layer", "0"], ["Linetype", <><Rule $w={33} />ByLay...</>],
    ["Linetype...", "1.0000"], ["Lineweig...", <><Rule $w={33} />ByLay...</>], ["Transpar...", "ByLayer"], ["Thickness", "0.0000"],
  ]],
  ["3D Visualization", [["Material", "ByLayer"], ["Shadow...", "Casts and Re..."]]],
  ["Plot style", [["Plot style", "ByLayer"], ["Plot styl...", "None"], ["Plot tabl...", "Model", 1], ["Plot tabl...", "Not available", 1]]],
  ["View", [["Center X", "4998.8981", 1], ["Center Y", "4000.6162", 1], ["Center Z", "0.0000", 1], ["Height", "4.6886", 1], ["Width", "9.8416", 1]]],
  ["Misc", []],
];

const PropertiesPalette = () => (
  <Palette>
    <PaletteTitle>PROPERTIES</PaletteTitle>
    <SelectRow>
      <Selection>No selection<SelectArrow><Caret $s={2.5} /></SelectArrow></Selection>
      <Icon name="pickadd" /><Icon name="pick" /><Icon name="quicksel" />
    </SelectRow>
    <PaletteBody>
      <ScrollThumb />
      <Groups>
        {groups.map(([title, rows]) => (
          <React.Fragment key={title}>
            <GroupHead>{title}<i /></GroupHead>
            <PropRows>
              {rows.map(([label, value, dim], i) => (
                <PropRow key={i}><span>{label}</span><PropValue $dim={dim}>{value}</PropValue></PropRow>
              ))}
            </PropRows>
          </React.Fragment>
        ))}
      </Groups>
    </PaletteBody>
  </Palette>
);

/* ---------- side toolbars ---------- */

const Toolbar = styled.div`
  width: ${(p) => p.$w}px;
  height: ${(p) => p.$h}px;
  overflow: hidden;
  display: flex;
  flex-direction: column;
  align-items: center;
  flex: none;
  border: 1px solid #3c3d3b;
  border-top-color: #444;
  background: #5f605d;
`;

const Grip = styled.div`
  width: 14px;
  height: 4px;
  margin: 2px 0 1.5px;
  flex: none;
  background: repeating-linear-gradient(90deg, #2f302e 0 1px, transparent 1px 2px);
`;

const ToolCell = styled.div`
  height: 20.63px;
  flex: none;
  display: grid;
  place-items: center;
  font-size: 18px;
  line-height: 18px;
  color: #fff;
`;

const Divider = styled.div`
  width: 100%;
  height: 1px;
  margin: 1px 0 3px;
  flex: none;
  background: ${(p) => p.$color};
`;

const drawTools = ["line", "xline", "pline", "polygon", "rect", "arc", "circle", "cloud", "spline", "ellipse", "ellipsearc",
  "insertflag", "block", "point", "hatch", "gradient", "region", "table", "A", "addsel"];
const modifyTools = ["erase", "copy", "mirror", "offset", "array", "move", "rotate", "scale", "stretch", "trim", "extend",
  "breakpt", "brk", "join", "chamfer", "fillet", "blend", "explode"];

const NoiseStrip = styled.div`
  position: absolute;
  right: 0;
  top: 0;
  width: 5px;
  height: 562px;
  background:
    repeating-linear-gradient(0deg, rgba(10, 10, 40, 0.75) 0 1px, transparent 1px 3px, rgba(220, 240, 230, 0.45) 3px 4px, transparent 4px 7px),
    repeating-linear-gradient(90deg, rgba(0, 0, 0, 0.5) 0 1px, transparent 1px 2px),
    linear-gradient(#e33 0 12px, #b8702e 20px, #7a9a4c 55px, #3fa09a 85px, #5c1668 105px 120px, #1d9b7d 135px, #1a8d4d 210px, #2a9aa0 300px, #1c8064 430px, #5a2f99 480px, #a8379c 510px, #e68fd8 562px);
  &::after {
    content: "";
    position: absolute;
    left: 0;
    top: 100%;
    width: 5px;
    height: 93px;
    background: linear-gradient(#2b2c2a 68px, #b9bcbe 68px);
  }
`;

/* ---------- canvas ---------- */

const Canvas = styled.section`
  position: relative;
  width: 1034px;
  margin: 0 4px 0 4px;
  flex: none;
  overflow: hidden;
  background: #20272f;
`;

const ViewLabel = styled.div`
  position: absolute;
  left: 3px;
  top: 6px;
  letter-spacing: -0.1px;
`;

const Prompt = styled.div`
  position: absolute;
  left: ${(p) => p.$x}px;
  top: ${(p) => p.$y}px;
  width: ${(p) => p.$w}px;
  height: ${(p) => p.$h}px;
  padding: 1px 4px;
  border: 1px solid #0c0e10;
  background: ${(p) => p.$bg};
  color: #191919;
  font-size: 10.5px;
  letter-spacing: ${(p) => p.$ls || 0}px;
  > mark { background: #0b6fc9; color: #e4f0fb; display: inline-block; height: 13px; line-height: 13px; }
`;

const Recorder = styled.div`
  position: absolute;
  left: 220px;
  top: 406px;
  width: 407px;
  height: 51px;
  display: flex;
  align-items: center;
  border-radius: 3px;
  background: #fdfefe;
  box-shadow: 0 0 3px #000;
  overflow: hidden;
  z-index: 2;
`;

const RecordInfo = styled.div`
  width: 112px;
  height: 41px;
  margin: 0 13px 0 20px;
  padding: 1px 0 0 7px;
  border-radius: 4px;
  background: #f0f1f1;
  color: #1b1b1b;
  line-height: 15px;
  letter-spacing: 0.2px;
  > b { display: block; margin-top: 4px; font: bold 16.5px/18px "Liberation Sans", sans-serif; letter-spacing: 0.4px; color: #000; }
`;

const History = styled.div`
  position: absolute;
  left: 256px;
  top: 450px;
  width: 261px;
  height: 15px;
  padding: 2px 9px;
  border-radius: 2px;
  background: #54585b;
  color: #d4d6d7;
  font: 11.6px/14px "DejaVu Sans Mono", monospace;
  letter-spacing: -0.42px;
`;

const CommandLine = styled.div`
  position: absolute;
  left: 200px;
  top: 468px;
  width: 631px;
  height: 25px;
  display: flex;
  background: #b4b8bb;
  color: #1d2022;
  font: 11.6px/24px "DejaVu Sans Mono", monospace;
  letter-spacing: -0.45px;
  > svg:last-child { margin: 10px 3px 0 auto; }
`;

const NavBar = styled.div`
  position: absolute;
  left: 1000px;
  top: 181px;
  width: 30px;
  height: 199px;
  border: 1px solid #73777b;
  border-radius: 3px;
  background: rgba(105, 109, 113, 0.82);
`;

const Watermark = styled.div`
  position: absolute;
  left: 1006px;
  top: 610px;
  z-index: 5;
  color: rgba(160, 164, 168, 0.62);
  font-size: 17.8px;
  line-height: 22px;
  > div { font-size: 13.5px; line-height: 20px; }
`;

const Drawing = () => (
  <svg width="1034" height="493" viewBox="217 162 1034 493" fill="none">
    <g fill="#fbfdfd" stroke="#fbfdfd" strokeWidth="1" fontFamily="Liberation Sans" fontSize="110.5">
      <text x="372.5" y="219" textLength="581.5" lengthAdjust="spacingAndGlyphs">E=5000.000</text>
      <text x="367" y="347.7" textLength="587" lengthAdjust="spacingAndGlyphs">N=4000.000</text>
    </g>
    <circle cx="1192.5" cy="242" r="37.5" stroke="#464c53" strokeWidth="9" />
    <rect x="1170" y="303" width="44" height="15" rx="3" fill="#a4a8ae" />
    <text x="1173" y="314.5" fontFamily="Liberation Sans" fontSize="11" fill="#676c72">WCS</text>
    <path d="M1203 308.5l3 3 3-3" stroke="#c4c7ca" />
    <rect x="1175.5" y="224.5" width="35" height="35" fill="#b9bbbf" stroke="#92959a" />
    <rect x="1182" y="231" width="22" height="22" fill="#abadb2" />
    <text x="1192.5" y="245.5" textAnchor="middle" fontFamily="Liberation Sans" fontWeight="bold" fontSize="9" fill="#3f434a" textLength="15" lengthAdjust="spacingAndGlyphs">TOP</text>
    <g stroke="#d6d9db" strokeWidth="1.2">
      <path d="M988.5 246h77.5l103.7 64M1169.7 162v148H1251M1108.7 249.3L1230 370.7M1230 249.3L1108.7 370.7" />
      <path d="M1169.7 267.7l30.3 11.6 11.7 30.7-12 30-30 12.7-30.4-12.7-13-30 12.7-30.7z" />
    </g>
    <g fontFamily="Liberation Sans" fontWeight="bold" fontSize="14.5" fill="#b4b8bb" textAnchor="middle">
      <text x="1192.5" y="209">N</text><text x="1192.5" y="286">S</text><text x="1154" y="247">W</text><text x="1231.5" y="247">E</text>
    </g>
    <g stroke="#f2f3f4">
      <path d="M1194 178.5h9" strokeWidth="2" /><path d="M1213.5 174h5v5.5h-5zM1215.5 173.5v-1.5h5v6h-1.5" strokeWidth="1.5" /><path d="M1232 173l7 7M1239 173l-7 7" strokeWidth="1.9" />
    </g>
    <path d="M230.5 594v47.5H277.5M226.5 637.5h8v8h-8z" stroke="#d4d7d9" />
    <g fontFamily="Liberation Sans" fontSize="18" fill="#c9cccf" textAnchor="middle"><text x="238" y="590">Y</text><text x="287.5" y="640.5">X</text></g>
    <path d="M748.5 493v65M716 525.5h65" stroke="#f4f4f4" />
  </svg>
);

const NavDrawing = () => (
  <svg width="28" height="197" viewBox="1218 344 28 197" fill="none" stroke="#4b4f53">
    <circle cx="1241.5" cy="348" r="2.5" /><path d="M1240 346.5l3 3M1243 346.5l-3 3" />
    <path d="M1222 371a10 10 0 0 1 10-10h9.5v10a10 10 0 0 1-19.5 0z" /><circle cx="1232" cy="371" r="6.5" /><circle cx="1232" cy="371" r="3.5" />
    <path d="M1230 389.5h5l-2.5 2z" />
    <path d="M1226 409q-4-5-2-5l4 4-2-9q2-2 4 6v-7q2-2 3 7l3-6q3 0 0 8l4-3q2 1-3 8-2 6-6 6-4-1-5-9z" />
    <path d="M1222 427l14 14M1236 427l-14 14M1222 431v-4h4M1232 427h4v4M1222 437v4h4" /><circle cx="1237" cy="441" r="4" /><path d="M1240 444l4 4" strokeWidth="2" />
    <path d="M1230 455.5h5l-2.5 2zM1230 491.5h5l-2.5 2z" />
    <path d="M1230 483v-17l3-3 3 3v17zM1228 469q-8 5 0 8M1237 469q10 3 3 8h-13M1227 474l-3 3 3 3" />
    <path d="M1221 502h13v6h-13zM1236 502h6v6h-6zM1221 511h15v11h-15z" /><path d="M1226 513l6 3.5-6 3.5z" fill="#3f4346" />
    <circle cx="1241" cy="536" r="2.5" />
  </svg>
);

const RecorderBar = () => (
  <Recorder>
    <svg width="70" height="51" viewBox="437 568 70 51">
      <path d="M437 568h61q16 25 0 51h-61z" fill="#353532" />
      <path d="M440.5 572v43M443.5 572v43" stroke="#52524e" />
      <circle cx="471.5" cy="593.5" r="23" fill="#1f556f" /><circle cx="471.5" cy="593.5" r="18" fill="#0b8fd8" />
      <path d="M468.5 586.5v14M475 586.5v14" stroke="#fff" strokeWidth="2.6" />
    </svg>
    <RecordInfo>Recording...<b>00:07:02</b></RecordInfo>
    <svg width="180" height="51" viewBox="652 568 180 51" fill="none">
      <path d="M654.5 582v23M658.5 582v12M662.5 582v20M666.5 582v5M670.5 582v5" stroke="#cfd6da" strokeWidth="2" />
      <path d="M654.5 583v22M658.5 593v12M662.5 601v4M666.5 582v23M670.5 588v17" stroke="#2189b4" strokeWidth="2" />
      <path d="M694 600l60-12v12z" fill="#d9edf7" /><path d="M693 600.5h61" stroke="#1a92c4" strokeWidth="2.4" /><path d="M754 596v9" stroke="#1a92c4" strokeWidth="2" />
      <circle cx="778" cy="591" r="10" stroke="#333" /><circle cx="778" cy="591" r="4.5" fill="#111" /><path d="M771 603q7 3 12 0M784 602.5h7M787.5 599v7" stroke="#333" />
      <path d="M808.5 596l11-11 5 5-11 11z" fill="#222" /><path d="M819.5 585l3-3 5 5-3 3z" fill="#fff" stroke="#222" /><path d="M806 604l2.5-8 5.500 5z" fill="#fff" stroke="#222" strokeWidth=".8" />
    </svg>
  </Recorder>
);

const DrawingArea = () => (
  <Canvas>
    <Drawing />
    <ViewLabel>[−][Top][2D Wireframe]</ViewLabel>
    <NavBar><NavDrawing /></NavBar>
    <Prompt $x={547} $y={379} $w={102} $h={21} $ls={0.05} $bg="#8b8c8c">Number location:</Prompt>
    <Prompt $x={651} $y={380} $w={61} $h={19} $ls={-0.25} $bg="#fff"><mark>4999.0120</mark></Prompt>
    <Prompt $x={715} $y={380} $w={61} $h={19} $ls={-0.25} $bg="#929393">3999.4933</Prompt>
    <History>Start or continue with number &lt; 1 &gt;? :</History>
    <RecorderBar />
    <CommandLine>
      <svg width="86" height="25" viewBox="417 630 86 25" fill="none">
        <rect x="417" y="630" width="50" height="25" fill="#4d5053" />
        <path d="M422 634v17M425 634v17" stroke="#a9acae" strokeWidth="1.5" strokeDasharray="1.5 1.5" />
        <path d="M432.5 638.5l7 7M439.5 638.5l-7 7" stroke="#d6d8d9" strokeWidth="1.6" />
        <path d="M454 640l8.5 8.5" stroke="#c6c8c9" strokeWidth="2.6" /><path d="M452 636.5a3 3 0 1 0 4 4" stroke="#c6c8c9" strokeWidth="2" />
        <rect x="473.5" y="636.5" width="13" height="12" rx="1" fill="#a9acaf" stroke="#888b8e" /><path d="M475.5 639l4 3.5-4 3M480 646.5h4.5" stroke="#333" />
        <path d="M490 641h5l-2.5 3z" fill="#666" />
      </svg>
      Number location:
      <svg width="7" height="5"><path d="M0 5h7L3.5 0z" fill="#111" /></svg>
    </CommandLine>
  </Canvas>
);

/* ---------- status bar ---------- */

const StatusBar = styled.div`
  height: 27px;
  display: flex;
  justify-content: space-between;
  background: #353633;
`;

const LayoutTabs = styled.div`
  display: flex;
  padding: 1px 0 0 11px;
  gap: 1px;
`;

const LayoutTab = styled.div`
  width: ${(p) => p.$w}px;
  height: 16px;
  display: grid;
  place-items: center;
  border-radius: 0 0 7px 7px;
  line-height: 15px;
  background: ${(p) => (p.$active ? "linear-gradient(#5d5e5b, #878885)" : "#50514e")};
  color: ${(p) => (p.$active ? "#f4f4f2" : "#b4b5b2")};
  font-weight: ${(p) => (p.$active ? 700 : 400)};
  letter-spacing: -0.2px;
  &:last-child { margin-left: 3px; }
`;

const StatusGroups = styled.div`
  display: flex;
  gap: 1px;
`;

const StatusGroup = styled.div`
  width: ${(p) => p.$w}px;
  display: grid;
  place-items: center;
  overflow: hidden;
  border: 1px solid #767774;
  background: #50514e;
  color: #f0f0ee;
  font-size: 11px;
  font-weight: 600;
  letter-spacing: -0.2px;
`;

const tri = (x, y = 666.5) => <path d={`M${x - 3.5} ${y}h7l-3.5 4z`} fill="#eee" stroke="none" />;
const man = (x, c) => <path d={`M${x} 661l2 5 6 9-6-1.5-2-3-2 3-6 1.5 6-9z`} fill={c} stroke="none" />;

const StatusPart = ({ x, w, children }) => (
  <StatusGroup $w={w}>
    <svg width={w - 2} height="25" viewBox={`${x + 1} 656 ${w - 2} 25`} fill="none" stroke="#c8c9c7" strokeWidth="1.3">{children}</svg>
  </StatusGroup>
);

const Status = () => (
  <StatusBar>
    <LayoutTabs>
      <LayoutTab $w={54} $active>Model</LayoutTab>
      <LayoutTab $w={60}>Layout1</LayoutTab>
      <LayoutTab $w={60}>Layout2</LayoutTab>
      <LayoutTab $w={21}><svg width="7" height="7"><path d="M3.5 .5v6M.5 3.5h6" stroke="#c4c4c2" strokeWidth="1.6" /></svg></LayoutTab>
    </LayoutTabs>
    <StatusGroups>
      <StatusGroup $w={47}>MODEL</StatusGroup>
      <StatusPart x={793} w={60}>
        <path d="M800 661v14M803 661v14M806 661v14M809 661v14M798 663.5h13M798 666.5h13M798 669.5h13M798 672.5h13" strokeWidth=".8" />
        <path d="M820 662.5h14M820 666h14M820 669.5h14M820 673h14" strokeDasharray="1 2" />{tri(845.5)}
      </StatusPart>
      <StatusPart x={854} w={97}>
        <path d="M860.5 663v11h12M861 669h5v5" stroke="#2d8cf0" />
        <circle cx="888.5" cy="668.5" r="5.5" /><path d="M888 668.5h8M893 665.5l3 3-3 3" />{tri(907.5)}
        <path d="M918 661l15 14M926 660v17" stroke="#929391" />{tri(944)}
      </StatusPart>
      <StatusPart x={952} w={60}>
        <path d="M969 663l-12 11h13M962 668l4 5" stroke="#2d8cf0" />
        <path d="M982.5 663.5h10v10h-10z" stroke="#2d8cf0" strokeWidth="1.5" /><circle cx="982.5" cy="664" r="2.5" fill="#18b418" stroke="none" />{tri(1004)}
      </StatusPart>
      <StatusPart x={1013} w={101}>
        {man(1024.5, "#2d8cf0")}<circle cx="1028.5" cy="663.5" r="2.5" stroke="#2d8cf0" />
        {man(1047, "#b9bab8")}<path d="M1054 660l-3 4h3l-3 4" stroke="#d8d8d8" />{man(1070, "#b9bab8")}
        <text x="1085.5" y="672" fontSize="10.5" fontWeight="600" fill="#eee" stroke="none">1:1</text>{tri(1105)}
      </StatusPart>
      <StatusPart x={1115} w={37}>
        <circle cx="1126" cy="668.5" r="3.6" strokeWidth="3" /><circle cx="1126" cy="668.5" r="5.5" strokeDasharray="2 2.3" strokeWidth="2" />{tri(1144.5)}
      </StatusPart>
      <StatusPart x={1153} w={23}><path d="M1157 668.5h13M1163.5 662v13" strokeWidth="1.6" /></StatusPart>
      <StatusPart x={1177} w={25}>
        <circle cx="1189" cy="668.5" r="7.5" fill="#0b62bd" stroke="#0a7ae6" /><path d="M1186 668l2.5 2.5 4-4.5" stroke="#0a3b78" />
      </StatusPart>
      <StatusPart x={1203} w={29}><path d="M1210 662h6v6h-6zM1217 673.5l-4-.5 3-5z" /><circle cx="1220" cy="667" r="3.3" /></StatusPart>
      <StatusPart x={1233} w={47}>
        <rect x="1239" y="663" width="13" height="10.5" /><path d="M1242 671l3-2M1249 665l-3 2M1242 668.5v2.5h2.5M1246.5 665h2.5v2.5" />
        <path d="M1261 664h15M1261 668.5h15M1261 673h15" strokeWidth="1.6" />
      </StatusPart>
    </StatusGroups>
  </StatusBar>
);

/* ---------- taskbar ---------- */

const TaskbarBox = styled.footer`
  height: 38px;
  display: flex;
  background: linear-gradient(90deg, #1b1614, #14110f 20%, #101318 50%, #101112 75%, #1c1614);
`;

const StartButton = styled.div`
  width: 45px;
  display: grid;
  place-items: center;
`;

const SearchBox = styled.div`
  width: 323px;
  padding: 0 13px 0 8px;
  display: flex;
  align-items: center;
  gap: 9px;
  background: #f0f1f0;
  color: #454645;
  font-size: 13px;
  > svg:last-child { margin-left: auto; }
`;

const TaskButton = styled.div`
  width: 45.9px;
  height: 38px;
  display: grid;
  place-items: center;
  &:nth-of-type(4) { margin-left: 1.6px; }
  ${(p) =>
    p.$active &&
    css`
      background: #404247;
      border-bottom: 2px solid #76b9ed;
    `}
`;

const Tray = styled.div`
  margin-left: auto;
  width: 256px;
  display: flex;
  align-items: center;
`;

const Clock = styled.div`
  width: 60px;
  margin-left: 5px;
  text-align: center;
  font-size: 11px;
  line-height: 17px;
  letter-spacing: -0.3px;
  color: #f4f4f4;
`;

const Taskbar = () => (
  <TaskbarBox>
    <StartButton>
      <svg width="15" height="16" viewBox="0 0 15 16"><path d="M0 2.2L6.500 1.200V7.500H0zM7.500 1L15 0v7.500H7.500zM0 8.500h6.500v6.200L0 13.800zM7.500 8.500H15V16l-7.500-1z" fill="#fff" /></svg>
    </StartButton>
    <SearchBox>
      <svg width="21" height="21"><circle cx="10.5" cy="10.5" r="8.5" fill="none" stroke="#111" strokeWidth="2.4" /></svg>
      Type here to search
      <svg width="12" height="16" fill="none" stroke="#333"><rect x="3.5" y=".5" width="5" height="9" rx="2" /><path d="M1 7v3q0 2.5 5 2.5T11 10V7M6 12.5V15M3.5 15.5h5" /></svg>
    </SearchBox>
    <TaskButton>
      <svg width="17" height="16" fill="none" stroke="#ddd"><path d="M1.5 0v3h9V0M1.5 5.5h9v5h-9zM1.5 16v-3h9v3M15 0v16" /><rect x="14" y="5" width="2.5" height="4" fill="#ddd" stroke="none" /></svg>
    </TaskButton>
    <TaskButton>
      <svg width="20" height="20" viewBox="0 0 20 20"><path d="M.5 9Q2 .5 10 .5q9 .5 9 8.5v2.5H6.500q.5 4.500 5.500 4.500 3 0 6-1.500v4Q15 20 11 20q-8-.5-8.500-8 .5-4 5-6Q3.500 6 .5 9zM6.800 8.500h6.500q-.3-3.500-3.200-3.500-3 .3-3.300 3.500z" fill="#1078d8" fillRule="evenodd" /></svg>
    </TaskButton>
    <TaskButton>
      <svg width="21" height="18"><path d="M0 1h8l2 2h11v14H0z" fill="#f6d77c" /><path d="M0 5h21v12H0z" fill="#fbe496" /><path d="M4 18v-7h13v7h-3v-3.5H7V18z" fill="#40a8cf" /></svg>
    </TaskButton>
    <TaskButton>
      <svg width="23" height="23"><path d="M8 7V4a3.5 3.5 0 0 1 7 0v3" fill="none" stroke="#ddd" strokeWidth="1.5" /><rect x="1" y="6" width="21" height="16" fill="#fff" /><path d="M6 8.5h5v5H6z" fill="#e64a26" /><path d="M12 8.5h5v5h-5z" fill="#74b02b" /><path d="M6 14.5h5v5H6z" fill="#149be0" /><path d="M12 14.5h5v5h-5z" fill="#f6b016" /></svg>
    </TaskButton>
    <TaskButton>
      <svg width="23" height="23"><rect width="23" height="23" fill="#eef3f1" /><path d="M2 9q3-6 8-6h11l-5 5q-3 2-6 0-3-1-5 2zM2 15q1-5 6-6 3 3 7 2l6-2-4 6h-6q-3-2-5 0z" fill="#137c6e" /><text x="1" y="21.5" fontFamily="Liberation Sans" fontWeight="bold" fontSize="5.5" textLength="21" lengthAdjust="spacingAndGlyphs" fill="#111">TOPLINK</text></svg>
    </TaskButton>
    <TaskButton>
      <svg width="23" height="23"><rect width="23" height="23" rx="4" fill="#f6971c" /><path d="M3 7q1-5 6-4 4 1 2 6l-1 3q1-2 5-2 5 0 6 3l-3 0q1 7-6 7-8 0-8-6l3 1q-1-4 2-6l1-2-3 1z" fill="#fff" /><circle cx="14" cy="15" r="2.6" fill="none" stroke="#f6971c" strokeWidth="1.4" /></svg>
    </TaskButton>
    <TaskButton>
      <svg width="23" height="19"><path d="M0 6l11.5-6L23 6v13H0z" fill="#fff" /><path d="M1 6.5h21L13 12l2 3-7-3z" fill="#14151a" /></svg>
    </TaskButton>
    <TaskButton $active>
      <svg width="23" height="23"><rect width="23" height="23" fill="#e6c9cd" /><path d="M10.500 2h2.500l6 15-1 1-4-.5-1-2.500h-4l-1 2.500-4 .5z" fill="#c4121c" /><path d="M11.500 10l1 2.500h-2z" fill="#8a0b12" /></svg>
    </TaskButton>
    <Tray>
      <svg width="142" height="38" viewBox="1024 682 142 38" fill="none" stroke="#eee" strokeWidth="1.2">
        <circle cx="1034" cy="701" r="2.7" /><path d="M1029.5 709q0-5 4.5-5t4.5 5" /><circle cx="1039.5" cy="696.5" r="2.7" /><path d="M1038 700.5q5-1 5 4.5" />
        <path d="M1065 704.5l5-5 5 5" />
        <rect x="1085" y="694" width="15" height="15" fill="#d81c22" stroke="none" /><path d="M1087 702q2-6 7-5.5 4 1 3.5 6l-3.5-2-3 1.5zM1091 702l-2 4q2 1 3-1" stroke="#fff" />
        <rect x="1108.5" y="697.5" width="12" height="8" /><path d="M1121.5 700v3" strokeWidth="2" /><rect x="1110" y="699" width="7" height="5" fill="#fff" stroke="none" />
        <path d="M1132 707q1-9 10-10M1135 707.5q1-6 8-6.5M1138 708q1-3 5-3.5" stroke="#ccc" /><circle cx="1142" cy="707" r="1.2" fill="#fff" />
        <path d="M1152.5 699.5h2.5l3.5-3.5v12l-3.5-3.5h-2.5zM1161 699q2 3 0 6M1163.5 697q3.5 5 0 10M1166 695q4.5 7 0 14" />
      </svg>
      <Clock>9:02 PM<br />5/25/2019</Clock>
      <svg width="49" height="38" viewBox="1231 682 49 38">
        <path d="M1243 694h15v12h-8l-3 3v-3h-4z" fill="#fff" /><path d="M1245.5 697.5h10M1245.5 700.5h10M1245.5 703.5h6" stroke="#222" />
        <circle cx="1257" cy="707.5" r="7" fill="#26211f" stroke="#9a9a9a" strokeWidth="1.3" /><text x="1257" y="711.5" textAnchor="middle" fontSize="11" fill="#fff">2</text>
      </svg>
    </Tray>
  </TaskbarBox>
);

const App = () => (
  <Page>
    <GlobalStyle />
    <Defs />
    <TopBar />
    <RibbonPanels />
    <FileTabs>
      <FileTab>Drawing1*<svg width="8" height="14"><path d="M1 3l6 6M7 3l-6 6" stroke="#4a4b49" strokeWidth="1.7" /></svg></FileTab>
      <NewTab><svg width="7" height="7"><path d="M3.5 .5v6M.5 3.5h6" stroke="#c4c4c2" strokeWidth="1.6" /></svg></NewTab>
    </FileTabs>
    <Workspace>
      <PropertiesPalette />
      <Toolbar $w={24} $h={421}>
        <Grip />
        {drawTools.map((n) => <ToolCell key={n}>{n === "A" ? "A" : <Icon name={n} />}</ToolCell>)}
      </Toolbar>
      <DrawingArea />
      <Toolbar $w={21} $h={493}>
        <Grip />
        {modifyTools.map((n) => <ToolCell key={n}><Icon name={n} /></ToolCell>)}
        <Divider $color="#333432" />
        <Grip />
        {["order1", "order2", "order3", "order4"].map((n) => <ToolCell key={n}><Icon name={n} /></ToolCell>)}
        <Divider $color="#d8d8d8" />
        <svg width="16" height="16"><text x="0" y="7" fontFamily="Liberation Sans" fontWeight="bold" fontSize="7" fill="#fff">ABC</text><rect x="3" y="8" width="12" height="8" fill="#e5e5e5" /></svg>
      </Toolbar>
    </Workspace>
    <Status />
    <Taskbar />
    <NoiseStrip />
    <Watermark>Activate Windows<div>Go to Settings to activate Windows.</div></Watermark>
  </Page>
);

export default App;
